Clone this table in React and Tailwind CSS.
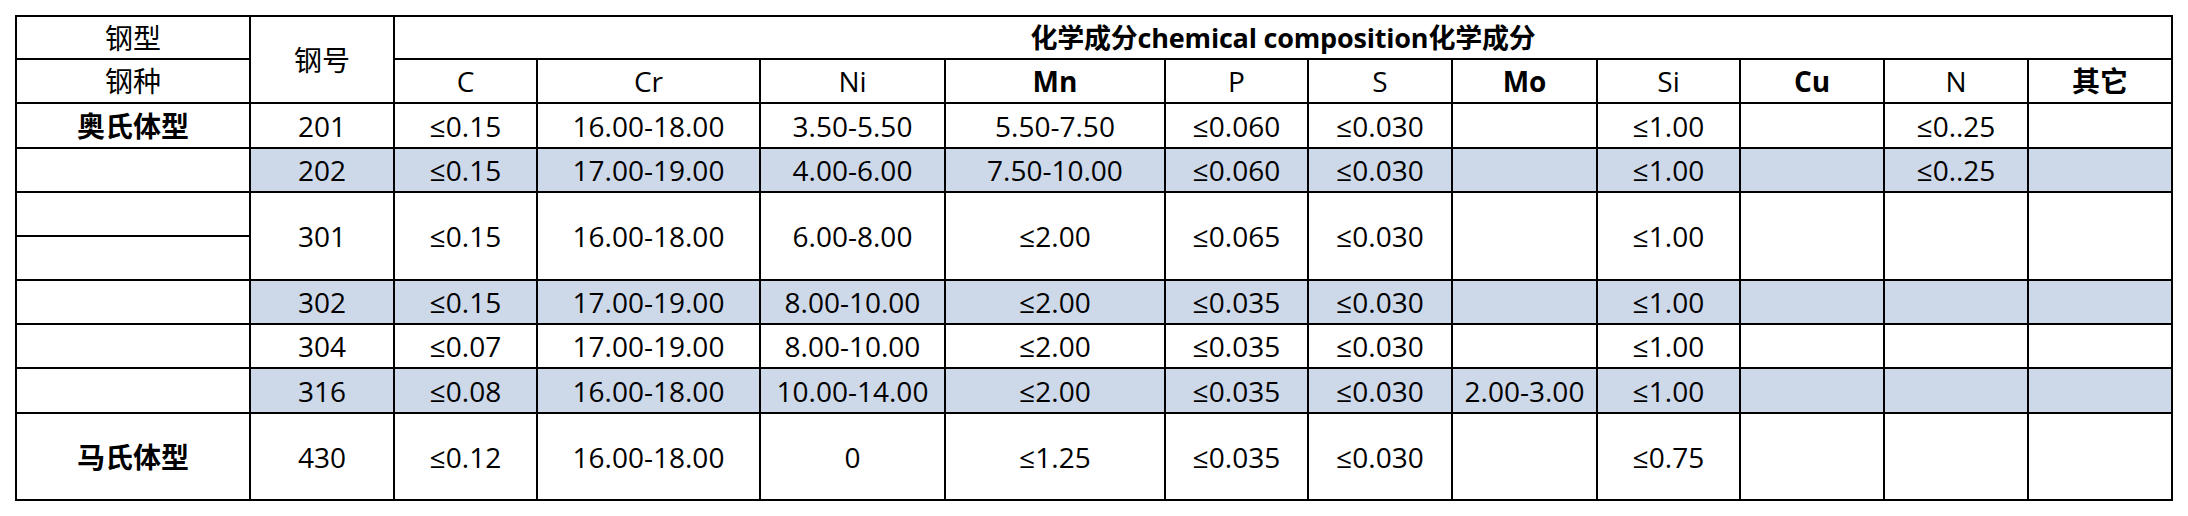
import React from "react";

const HL = "bg-[#cdd8e9]";

const rows = [
  { id: "201", hl: false, v: ["≤0.15", "16.00-18.00", "3.50-5.50", "5.50-7.50", "≤0.060", "≤0.030", "", "≤1.00", "", "≤0..25", ""] },
  { id: "202", hl: true, v: ["≤0.15", "17.00-19.00", "4.00-6.00", "7.50-10.00", "≤0.060", "≤0.030", "", "≤1.00", "", "≤0..25", ""] },
  { id: "301", hl: false, tall: true, v: ["≤0.15", "16.00-18.00", "6.00-8.00", "≤2.00", "≤0.065", "≤0.030", "", "≤1.00", "", "", ""] },
  { id: "302", hl: true, v: ["≤0.15", "17.00-19.00", "8.00-10.00", "≤2.00", "≤0.035", "≤0.030", "", "≤1.00", "", "", ""] },
  { id: "304", hl: false, v: ["≤0.07", "17.00-19.00", "8.00-10.00", "≤2.00", "≤0.035", "≤0.030", "", "≤1.00", "", "", ""] },
  { id: "316", hl: true, v: ["≤0.08", "16.00-18.00", "10.00-14.00", "≤2.00", "≤0.035", "≤0.030", "2.00-3.00", "≤1.00", "", "", ""] },
  { id: "430", hl: false, v: ["≤0.12", "16.00-18.00", "0", "≤1.25", "≤0.035", "≤0.030", "", "≤0.75", "", "", ""] },
];

const heads = [
  ["C", false],
  ["Cr", false],
  ["Ni", false],
  ["Mn", true],
  ["P", false],
  ["S", false],
  ["Mo", true],
  ["Si", false],
  ["Cu", true],
  ["N", false],
  ["其它", true],
];

function Cell({ children, className = "" }) {
  return (
    <div
      className={
        "flex items-center justify-center border-r-2 border-b-2 border-black whitespace-nowrap leading-none " +
        className
      }
    >
      {children}
    </div>
  );
}

export default function App() {
  return (
    <div className="w-[2188px] h-[516px] bg-white pt-[15px] pl-[15px]">
      <div
        className="grid w-max border-l-2 border-t-2 border-black text-[28px] text-black grid-cols-[234px_144px_143px_223px_185px_220px_143px_144px_145px_143px_144px_144px_144px] grid-rows-[43px_44px_45px_44px_44px_44px_44px_44px_45px_87px]"
        style={{ fontFamily: '"Open Sans", "Noto Sans CJK SC", sans-serif' }}
      >
        {/* header row 1 */}
        <Cell>钢型</Cell>
        <Cell className="row-span-2">钢号</Cell>
        <Cell className="col-span-11 font-bold text-[27px] tracking-[-0.2px]">化学成分chemical composition化学成分</Cell>
        {/* header row 2 */}
        <Cell>钢种</Cell>
        {heads.map(([h, b], i) => (
          <Cell key={i} className={b ? "font-bold" : ""}>
            {h}
          </Cell>
        ))}
        {rows.map((r) => {
          const bg = r.hl ? HL : "";
          const span = r.tall ? "row-span-2" : "";
          let first;
          if (r.id === "201") first = <Cell className="font-bold">奥氏体型</Cell>;
          else if (r.id === "430") first = <Cell className="font-bold">马氏体型</Cell>;
          else if (r.tall)
            first = (
              <Cell className="row-span-2 !border-b-0 flex-col items-stretch">
                <div className="flex-1 border-b-2 border-black"></div>
                <div className="flex-1 border-b-2 border-black"></div>
              </Cell>
            );
          else first = <Cell></Cell>;
          return (
            <React.Fragment key={r.id}>
              {first}
              <Cell className={`${bg} ${span}`}>{r.id}</Cell>
              {r.v.map((x, i) => (
                <Cell key={i} className={`${bg} ${span}`}>
                  {x}
                </Cell>
              ))}
            </React.Fragment>
          );
        })}
      </div>
    </div>
  );
}
